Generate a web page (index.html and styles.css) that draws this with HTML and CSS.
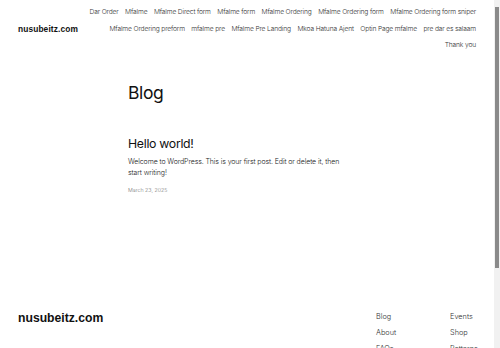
FILE: index.html
```html
<!DOCTYPE html>
<html lang="en">
<head>
  <meta charset="UTF-8" />
  <meta name="viewport" content="width=device-width, initial-scale=1.0">
  <title>Blog – nusubeitz.com</title>
  <link rel="stylesheet" href="styles.css">
</head>
<body>
  <div class="page">
    <header class="site-header">
      <a class="site-title" href="#">nusubeitz.com</a>
      <nav class="main-nav">
        <a href="#">Dar Order</a>
        <a href="#">Mfalme</a>
        <a href="#">Mfalme Direct form</a>
        <a href="#">Mfalme form</a>
        <a href="#">Mfalme Ordering</a>
        <a href="#">Mfalme Ordering form</a>
        <a href="#">Mfalme Ordering form sniper</a>
        <a href="#">Mfalme Ordering preform</a>
        <a href="#">mfalme pre</a>
        <a href="#">Mfalme Pre Landing</a>
        <a href="#">Mkoa Hatuna Ajent</a>
        <a href="#">Optin Page mfalme</a>
        <a href="#">pre dar es salaam</a>
        <a href="#">Thank you</a>
      </nav>
    </header>

    <main class="content">
      <h1 class="page-title">Blog</h1>
      <article class="post">
        <h2 class="post-title"><a href="#">Hello world!</a></h2>
        <p class="post-excerpt">Welcome to WordPress. This is your first post. Edit or delete it, then start writing!</p>
        <time class="post-date">March 23, 2025</time>
      </article>
    </main>

    <footer class="site-footer">
      <a class="footer-title" href="#">nusubeitz.com</a>
      <div class="footer-links">
        <ul>
          <li><a href="#">Blog</a></li>
          <li><a href="#">About</a></li>
          <li><a href="#">FAQs</a></li>
        </ul>
        <ul>
          <li><a href="#">Events</a></li>
          <li><a href="#">Shop</a></li>
          <li><a href="#">Patterns</a></li>
        </ul>
      </div>
    </footer>
  </div>

  <div class="scrollbar"><span class="thumb"></span></div>
</body>
</html>
```

FILE: styles.css
```css
html, body {
  margin: 0;
  padding: 0;
  height: 100%;
  overflow: hidden;
}
body {
  font-family: Inter, "Noto Sans", sans-serif;
  background-color: #fff;
  color: #111;
}
a {
  color: inherit;
  text-decoration: none;
}
.page {
  width: 494px;
}
.site-header {
  display: flex;
  justify-content: space-between;
  align-items: center;
  padding: 6px 18px 0 18px;
  height: 46px;
}
.site-title {
  font-family: "Liberation Sans", Arial, sans-serif;
  font-size: 8.4px;
  font-weight: 600;
  letter-spacing: 0.1px;
  flex-shrink: 0;
}
.main-nav {
  display: flex;
  flex-wrap: wrap;
  justify-content: flex-end;
  column-gap: 6.5px;
  row-gap: 6px;
  width: 392px;
  font-size: 6.7px;
  font-weight: 300;
  line-height: 10.5px;
  letter-spacing: -0.15px;
  color: #333;
}
.content {
  padding: 29px 0 0 128px;
  width: 212px;
}
.page-title {
  font-size: 17.5px;
  font-weight: 400;
  letter-spacing: -0.4px;
  margin: 0;
  line-height: 24px;
}
.post {
  margin-top: 30px;
}
.post-title {
  font-size: 12.3px;
  font-weight: 400;
  letter-spacing: -0.3px;
  line-height: 18px;
  margin: 0;
}
.post-excerpt {
  font-size: 7px;
  font-weight: 300;
  line-height: 11px;
  letter-spacing: -0.1px;
  margin: 3px 0 0 0;
  color: #222;
}
.post-date {
  display: block;
  margin-top: 9px;
  font-size: 5.3px;
  color: #777;
  font-weight: 300;
}
.site-footer {
  display: flex;
  justify-content: space-between;
  padding: 116px 0 0 18px;
}
.footer-title {
  font-family: "Liberation Sans", Arial, sans-serif;
  font-size: 12.2px;
  font-weight: 600;
  margin-top: 2px;
}
.footer-links {
  display: flex;
  gap: 54px;
  width: 118px;
}
.footer-links ul {
  list-style: none;
  margin: 0;
  padding: 0;
  font-size: 7.3px;
  font-weight: 300;
  color: #333;
}
.footer-links li {
  line-height: 16px;
}
.scrollbar {
  position: fixed;
  top: 0;
  right: 0;
  width: 6px;
  height: 348px;
  background-color: #f1f1f1;
}
.thumb {
  position: absolute;
  top: 7px;
  left: 1px;
  width: 4px;
  height: 261px;
  background-color: #8a8a8a;
}
```
